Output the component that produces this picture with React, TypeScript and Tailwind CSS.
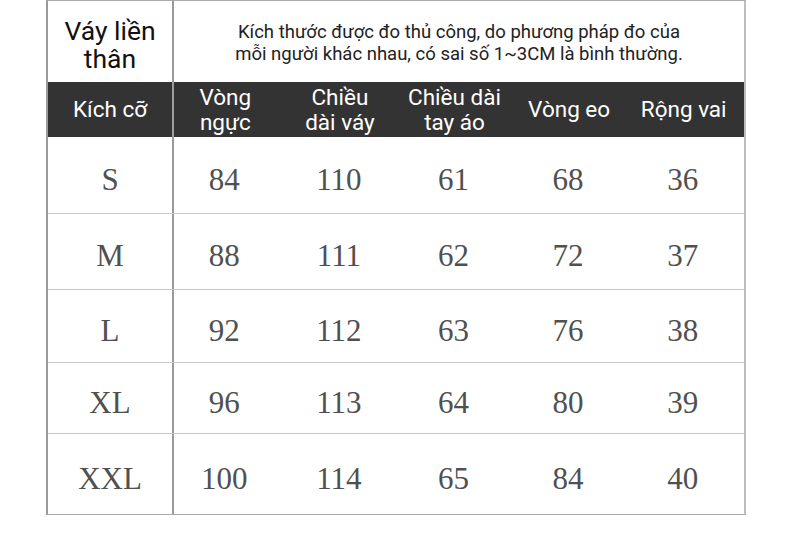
const cols = ['Vòng\nngực', 'Chiều\ndài váy', 'Chiều dài\ntay áo', 'Vòng eo', 'Rộng vai'];

const rows: { size: string; values: string[]; h: string }[] = [
  { size: 'S', values: ['84', '110', '61', '68', '36'], h: 'h-[76px]' },
  { size: 'M', values: ['88', '111', '62', '72', '37'], h: 'h-[76px]' },
  { size: 'L', values: ['92', '112', '63', '76', '38'], h: 'h-[73px]' },
  { size: 'XL', values: ['96', '113', '64', '80', '39'], h: 'h-[71px]' },
  { size: 'XXL', values: ['100', '114', '65', '84', '40'], h: 'h-[81px]' },
];

const App = () => {
  return (
    <div className="w-[790px] h-[536px] bg-white pl-[46px] font-['Roboto',sans-serif]">
      <div className="w-[700px] border-t border-t-[#aaa] border-l-2 border-l-[#9a9a9a] border-r-2 border-r-[#bdbdbd] border-b border-b-[#aaa]">
        {/* title row */}
        <div className="flex h-[81px]">
          <div className="w-[126px] flex flex-col items-center justify-center text-center text-[26.5px] leading-[28px] text-[#111] border-r-2 border-r-[#9a9a9a] pt-[6px]">
            <span>Váy liền</span>
            <span>thân</span>
          </div>
          <div className="flex-1 flex items-center justify-center text-center text-[18.5px] leading-[22px] text-[#222] pt-[2px]">
            Kích thước được đo thủ công, do phương pháp đo của
            <br />
            mỗi người khác nhau, có sai số 1~3CM là bình thường.
          </div>
        </div>
        {/* dark header */}
        <div className="flex h-[55px] bg-[#333333] text-white text-[22.5px] leading-[25px]">
          <div className="w-[126px] flex items-center justify-center border-r-2 border-r-[#a0a0a0]">Kích cỡ</div>
          <div className="flex-1 grid grid-cols-5 ml-[-6px] pr-[3px]">
            {cols.map((c) => (
              <div key={c} className="flex items-center justify-center text-center whitespace-pre-line">
                {c}
              </div>
            ))}
          </div>
        </div>
        {/* data */}
        {rows.map((r, i) => (
          <div
            key={r.size}
            className={`flex ${r.h} ${i > 0 ? 'border-t border-t-[#c8c8c8]' : ''} font-['Liberation_Serif',serif] text-[31px] text-[#505050]`}
          >
            <div className="w-[126px] flex items-center justify-center border-r-2 border-r-[#9a9a9a] pt-[10px]">{r.size}</div>
            <div className="flex-1 grid grid-cols-5 ml-[-7px] pr-[4px]">
              {r.values.map((v, j) => (
                <div key={j} className="flex items-center justify-center pt-[10px]">
                  {v}
                </div>
              ))}
            </div>
          </div>
        ))}
      </div>
    </div>
  );
};

export default App;
